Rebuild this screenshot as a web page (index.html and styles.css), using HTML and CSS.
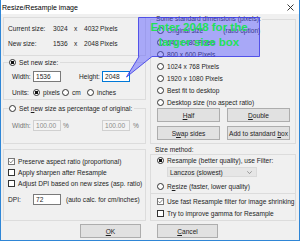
FILE: index.html
```html
<!DOCTYPE html>
<html>
<head>
    <meta charset="utf-8" />
    <title>Resize/Resample image</title>
    <link rel="stylesheet" href="styles.css">
</head>
<body>
    <div class="window">
        <div class="titlebar">
            <span class="title">Resize/Resample image</span>
            <svg class="close" width="7" height="7" viewBox="0 0 7 7">
                <path d="M0.5 0.5 L6.5 6.5 M6.5 0.5 L0.5 6.5" stroke="#222" stroke-width="0.9" fill="none" />
            </svg>
        </div>
        <div class="content">
            <div class="col left">
                <div class="info">
                    <span>Current size:</span><span>3024</span><span>x</span><span>4032</span><span>Pixels</span>
                    <span>New size:</span><span>1536</span><span>x</span><span>2048</span><span>Pixels</span>
                </div>

                <div class="group g-size">
                    <div class="legend"><span class="radio on"></span><span>Set new size:</span></div>
                    <div class="row r-wh">
                        <span class="lbl w21">Width:</span>
                        <span class="input">1536</span>
                        <span class="lbl hgt">Height:</span>
                        <span class="input focus">2048</span>
                    </div>
                    <div class="row r-units">
                        <span class="lbl w21">Units:</span>
                        <span class="opt o-px"><span class="radio on"></span>pixels</span>
                        <span class="opt o-cm"><span class="radio"></span>cm</span>
                        <span class="opt"><span class="radio"></span>inches</span>
                    </div>
                </div>

                <div class="group g-pct">
                    <div class="legend"><span class="radio"></span><span>Set <u>n</u>ew size as percentage of original:</span></div>
                    <div class="row r-pct">
                        <span class="lbl w21 dim">Width:</span>
                        <span class="input off">100.00</span>
                        <span class="pct">%</span>
                        <span class="input off">100.00</span>
                        <span class="pct last">%</span>
                    </div>
                </div>

                <div class="group g-opt">
                    <div class="row r-chk"><span class="check on"><svg width="5" height="5" viewBox="0 0 5 5"><path d="M0.3 2.4 L1.8 3.9 L4.7 0.6" stroke="#666" stroke-width="0.8" fill="none" /></svg></span>Preserve aspect ratio (proportional)</div>
                    <div class="row r-chk"><span class="check"></span>Apply sharpen after Resample</div>
                    <div class="row r-chk"><span class="check"></span>Adjust DPI based on new sizes (asp. ratio)</div>
                    <div class="row r-dpi">
                        <span class="lbl w25">DPI:</span>
                        <span class="input">72</span>
                        <span class="note">(auto calc. for cm/inches)</span>
                    </div>
                </div>
            </div>

            <div class="col right">
                <div class="group g-std">
                    <div class="legend plain">Some standard dimensions (pixels):</div>
                    <div class="std-list">
                        <div class="row r-std"><span class="radio"></span>Original size<span class="aside">(ratio option)</span></div>
                        <div class="row r-std"><span class="radio"></span>640 x 480 Pixels</div>
                        <div class="row r-std"><span class="radio"></span>800 x 600 Pixels</div>
                        <div class="row r-std"><span class="radio"></span>1024 x 768 Pixels</div>
                        <div class="row r-std"><span class="radio"></span>1920 x 1080 Pixels</div>
                        <div class="row r-std"><span class="radio"></span>Best fit to desktop</div>
                        <div class="row r-std"><span class="radio"></span>Desktop size (no aspect ratio)</div>
                    </div>
                    <div class="btn-row">
                        <span class="btn"><span><u>H</u>alf</span></span>
                        <span class="btn"><span><u>D</u>ouble</span></span>
                    </div>
                    <div class="btn-row second">
                        <span class="btn"><span>S<u>w</u>ap sides</span></span>
                        <span class="btn"><span>Add to standard <u>b</u>ox</span></span>
                    </div>
                </div>

                <div class="method-label">Size method:</div>
                <div class="group g-method">
                    <div class="row r-std"><span class="radio on"></span>Resample (better quality), use Filter:</div>
                    <div class="select">
                        <span>Lanczos (slowest)</span>
                        <svg width="5" height="3" viewBox="0 0 5 3"><path d="M0.3 0.3 L2.5 2.6 L4.7 0.3" stroke="#777" stroke-width="0.7" fill="none" /></svg>
                    </div>
                    <div class="row r-std r-resize"><span class="radio"></span><span>R<u>e</u>size (faster, lower quality)</span></div>
                </div>
                <div class="group g-fast">
                    <div class="row r-fast"><span class="check on"><svg width="5" height="5" viewBox="0 0 5 5"><path d="M0.3 2.4 L1.8 3.9 L4.7 0.6" stroke="#666" stroke-width="0.8" fill="none" /></svg></span>Use fast Resample filter for image shrinking</div>
                    <div class="row r-fast"><span class="check"></span>Try to improve gamma for Resample</div>
                </div>
            </div>
        </div>

        <div class="actions">
            <span class="btn action"><span><u>O</u>K</span></span>
            <span class="btn action"><span><u>C</u>ancel</span></span>
        </div>

        <!-- annotation drawn over the dialog -->
        <svg class="callout" width="300" height="241" viewBox="0 0 300 241">
            <path d="M138.5 17.5 H259.5 V56.5 H152 L126.5 77 L139 56.5 H138.5 Z" fill="rgba(80,80,255,0.45)" stroke="rgba(60,60,230,0.85)" stroke-width="1" />
        </svg>
        <div class="callout-text">Enter 2048 for the<br>larger size box</div>
    </div>
</body>
</html>
```

FILE: styles.css
```css
body {
    margin: 0;
    background-color: #f0f0f0;
    font-family: "Liberation Sans", Arial, sans-serif;
    font-size: 6.6px;
    color: #1e1e1e;
}

.window {
    position: relative;
    width: 300px;
    height: 241px;
    box-sizing: border-box;
    border: 1px solid #2f86d6;
    border-top: none;
    background-color: #f0f0f0;
    overflow: hidden;
}

.titlebar {
    height: 14px;
    display: flex;
    align-items: center;
    justify-content: space-between;
    padding: 0 5px 0 1px;
    background-color: #fff;
}

.title {
    font-size: 7px;
    color: #000;
}

.content {
    height: 207px;
    box-sizing: border-box;
    display: flex;
    gap: 4px;
    padding: 3px 3px 0 2px;
}

.col.left {
    width: 143px;
}

.col.right {
    width: 146px;
}

.row {
    display: flex;
    align-items: center;
    white-space: nowrap;
}

u {
    text-decoration-thickness: 0.6px;
    text-underline-offset: 1px;
}

/* current / new size block */
.info {
    height: 39px;
    box-sizing: border-box;
    border: 1px solid #dcdcdc;
    display: grid;
    grid-template-columns: 45px 21px 10px 16px auto;
    grid-auto-rows: 15px;
    align-items: center;
    padding: 3px 0 0 4px;
}

.group {
    box-sizing: border-box;
    border: 1px solid #dcdcdc;
}

.legend {
    display: flex;
    align-items: center;
    gap: 3px;
    width: max-content;
    height: 9px;
    margin: -5px 0 0 5px;
    padding-right: 2px;
    background-color: #f0f0f0;
    white-space: nowrap;
}

.legend.plain {
    margin: -6px 0 0 4px;
    padding: 0 1px;
}

.radio {
    flex: none;
    width: 7px;
    height: 7px;
    box-sizing: border-box;
    border: 1px solid #333;
    border-radius: 50%;
    background-color: #fff;
}

.radio.on {
    background: radial-gradient(circle, #111 0 1.5px, #fff 1.9px);
}

.check {
    flex: none;
    width: 7px;
    height: 7px;
    box-sizing: border-box;
    border: 1px solid #333;
    background-color: #fff;
    margin-right: 3px;
    display: flex;
}

.check.on {
    border-color: #777;
}

.input {
    flex: none;
    width: 28px;
    height: 11px;
    box-sizing: border-box;
    border: 1px solid #7a7a7a;
    background-color: #fff;
    padding-left: 2px;
    display: flex;
    align-items: center;
}

.input.focus {
    border-color: #0078d7;
}

.input.off {
    border-color: #d0d0d0;
    background-color: #f3f3f3;
    color: #8c8c8c;
}

.dim {
    color: #777;
}

.lbl.w21 {
    width: 21px;
}

.lbl.w25 {
    width: 25px;
}

.lbl.hgt {
    width: 23px;
    margin-left: 18px;
}

/* set new size */
.g-size {
    height: 38px;
    margin-top: 6px;
}

.r-wh {
    height: 11px;
    margin-top: 4px;
    padding-left: 8px;
}

.r-units {
    height: 10px;
    margin-top: 5px;
    padding-left: 8px;
}

.opt {
    display: flex;
    align-items: center;
    gap: 3px;
}

.opt.o-px {
    width: 29px;
}

.opt.o-cm {
    width: 25px;
}

/* percentage */
.g-pct {
    height: 36px;
    margin-top: 8px;
}

.r-pct {
    height: 11px;
    margin-top: 7px;
    padding-left: 8px;
}

.pct {
    width: 39px;
    margin-left: 2px;
    color: #777;
}

.pct.last {
    width: auto;
    margin-left: 3px;
}

/* options */
.g-opt {
    height: 72px;
    margin-top: 5px;
    padding-top: 6px;
}

.r-chk {
    height: 11px;
    padding-left: 4px;
}

.r-dpi {
    height: 11px;
    margin-top: 5px;
    padding-left: 4px;
}

.note {
    margin-left: 5px;
}

/* standard dimensions */
.g-std {
    height: 125px;
    margin-top: 2px;
}

.std-list {
    margin-top: 1px;
}

.r-std {
    height: 12px;
    gap: 3px;
    padding-left: 6px;
}

.aside {
    margin-left: 17px;
}

.btn-row {
    display: flex;
    gap: 7px;
    padding-left: 6px;
}

.btn-row.second {
    margin-top: 4px;
}

.btn {
    width: 63px;
    height: 14px;
    box-sizing: border-box;
    border: 1px solid #adadad;
    background-color: #e1e1e1;
    display: flex;
    align-items: center;
    justify-content: center;
    white-space: nowrap;
}

/* size method */
.method-label {
    height: 9px;
    margin-top: 1px;
    padding-left: 5px;
    display: flex;
    align-items: center;
}

.g-method {
    height: 40px;
}

.g-method .r-std {
    height: 11px;
}

.select {
    width: 90px;
    height: 10px;
    box-sizing: border-box;
    margin: 1px 0 0 16px;
    padding: 0 4px 0 2px;
    border: 1px solid #dadada;
    background-color: #e6e6e6;
    display: flex;
    align-items: center;
    justify-content: space-between;
}

.g-method .r-resize {
    margin-top: 4px;
}

.g-fast {
    height: 27px;
    border-top: none;
    padding-top: 1px;
    overflow: hidden;
}

.r-fast {
    height: 12px;
    padding-left: 6px;
}

/* OK / Cancel */
.actions {
    display: flex;
    gap: 16px;
    margin-top: 3px;
    padding-left: 79px;
}

.btn.action {
    width: 61px;
}

/* annotation */
.callout {
    position: absolute;
    left: -1px;
    top: 0;
    pointer-events: none;
}

.callout-text {
    position: absolute;
    left: 137px;
    top: 17px;
    width: 122px;
    padding-top: 3px;
    text-align: center;
    font-size: 11.5px;
    line-height: 15px;
    font-weight: bold;
    color: #22e05a;
}
```
